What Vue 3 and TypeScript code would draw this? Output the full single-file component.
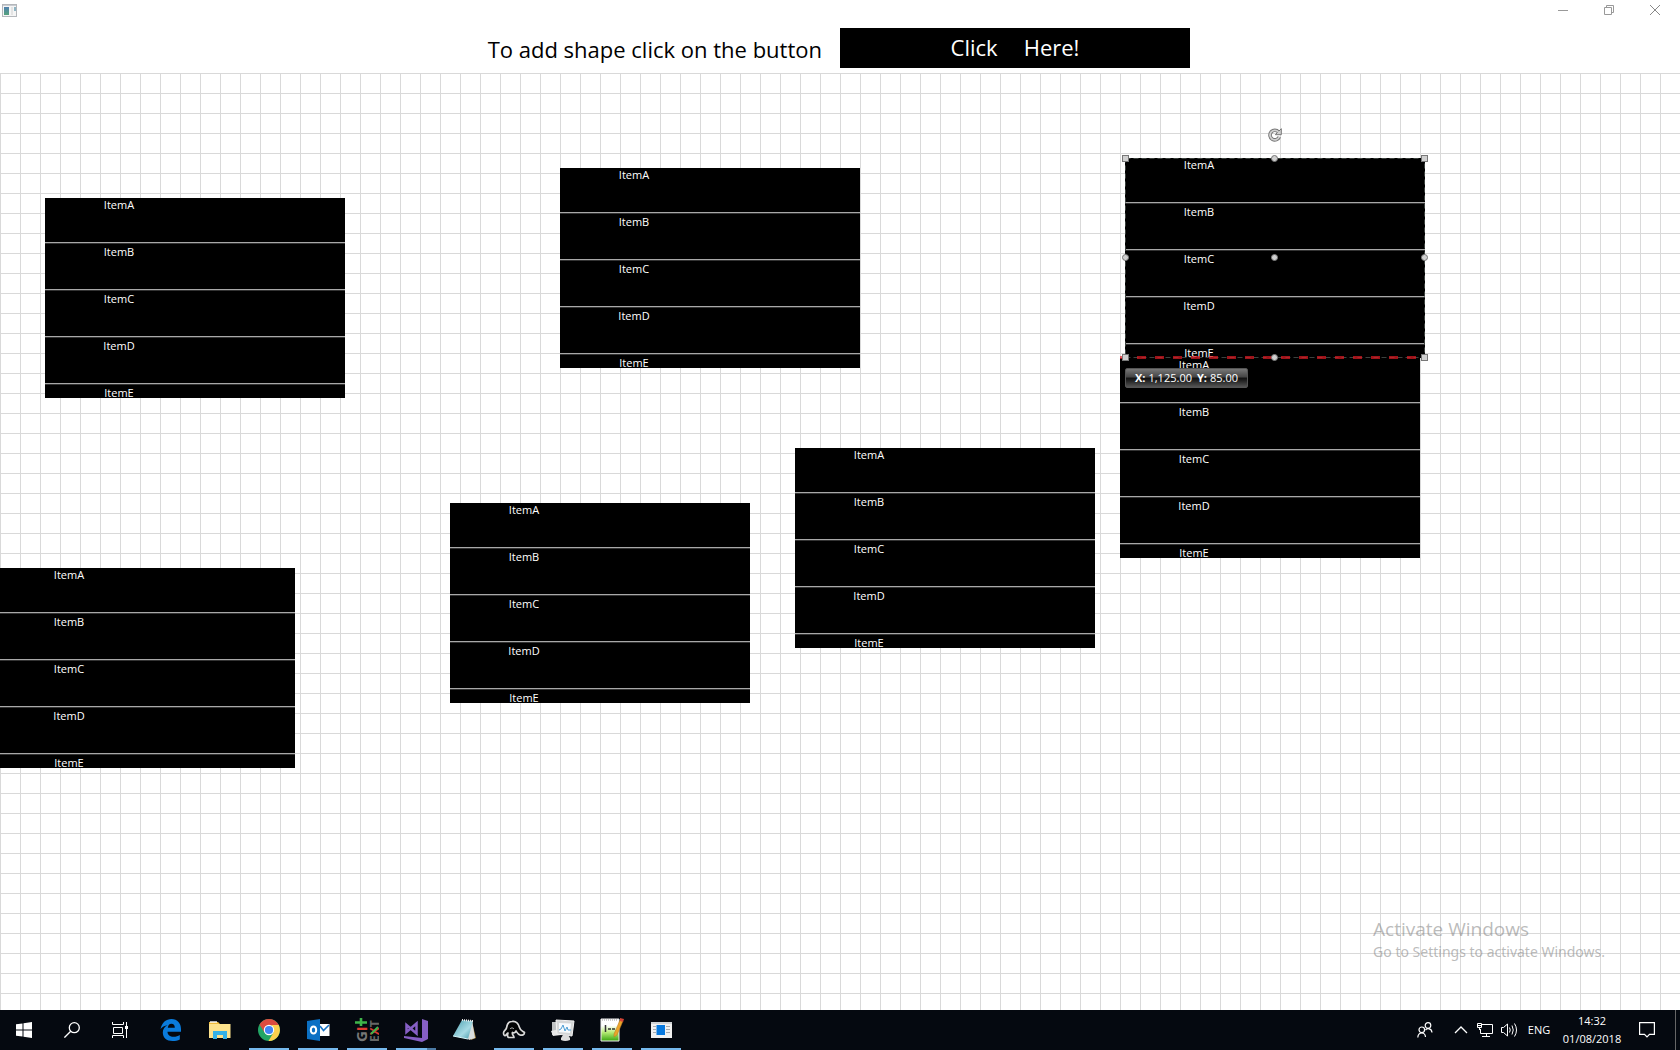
<script setup lang="ts">
interface Shape {
  id: number
  x: number
  y: number
  selected?: boolean
}

const items: string[] = ['ItemA', 'ItemB', 'ItemC', 'ItemD', 'ItemE']

const shapes: Shape[] = [
  { id: 1, x: 45, y: 125 },
  { id: 2, x: 560, y: 95 },
  { id: 3, x: 1120, y: 285 },
  { id: 4, x: -5, y: 495 },
  { id: 5, x: 450, y: 430 },
  { id: 6, x: 795, y: 375 },
  { id: 7, x: 1125, y: 85, selected: true },
]

const handles: string[] = ['nw', 'n', 'ne', 'w', 'c', 'e', 'sw', 's', 'se']
</script>

<template>
  <div class="screen">
    <header class="titlebar">
      <svg class="app-icon" width="16" height="14" viewBox="0 0 16 14">
        <defs>
          <linearGradient id="pane" x1="0" y1="0" x2="0" y2="1">
            <stop offset="0" stop-color="#4f7fae" />
            <stop offset="1" stop-color="#55a37c" />
          </linearGradient>
        </defs>
        <rect x="0.5" y="0.5" width="14" height="12" fill="#f5f5f5" stroke="#b4b7bb" />
        <rect x="1" y="1" width="13" height="1" fill="#c9ccd1" />
        <rect x="2" y="3" width="5" height="8" fill="url(#pane)" />
        <rect x="9" y="3" width="2" height="8" fill="#e3e3e3" />
        <rect x="12" y="3" width="2" height="4" fill="#8fb5c4" />
      </svg>
      <div class="window-controls">
        <button type="button" aria-label="Minimize">
          <svg width="10" height="10"><path d="M0 5.500H10" stroke="#999" /></svg>
        </button>
        <button type="button" aria-label="Restore">
          <svg width="10" height="10"><path d="M.5 2.500h7v7h-7zM2.500 2.500v-2h7v7h-2" fill="none" stroke="#999" /></svg>
        </button>
        <button type="button" aria-label="Close">
          <svg width="10" height="10"><path d="M0 0L10 10M10 0L0 10" stroke="#888" /></svg>
        </button>
      </div>
    </header>

    <section class="prompt">
      <p id="prompt-text">To add shape click on the button</p>
      <button type="button" class="add" aria-describedby="prompt-text">
        <span>Click</span><span>Here!</span>
      </button>
    </section>

    <main class="canvas">
      <div
        v-for="s in shapes"
        :key="s.id"
        class="node"
        :style="{ left: s.x + 'px', top: s.y + 'px' }"
      >
        <ul>
          <li v-for="item in items" :key="item"><span>{{ item }}</span></li>
        </ul>
        <template v-if="s.selected">
          <svg class="outline" width="300" height="200" viewBox="0 0 300 200">
            <rect x="0.5" y="0.5" width="299" height="199" fill="none" stroke="#3c423e" stroke-dasharray="5 3" />
          </svg>
          <svg class="guide" width="305" height="3" viewBox="0 0 305 3">
            <path d="M0 1.500H305" stroke="#e01b24" stroke-opacity="0.7" stroke-width="3" stroke-dasharray="9 9" stroke-dashoffset="1" />
          </svg>
          <i v-for="h in handles" :key="h" class="handle" :class="h"></i>
          <svg class="rotate" width="14" height="14" viewBox="0 0 14 14">
            <path d="M10.500 4A4.800 4.800 0 1 0 11.300 8.800" fill="none" stroke="#777" stroke-width="3.600" />
            <path d="M13.300.7V6.700H7.300L9.300 4.700z" fill="#d0d0d0" stroke="#777" />
            <path d="M10.500 4A4.800 4.800 0 1 0 11.300 8.800" fill="none" stroke="#d0d0d0" stroke-width="1.800" />
          </svg>
          <div class="position"><b>X:</b><span>1,125.00</span><b>Y:</b><span>85.00</span></div>
        </template>
      </div>
      <aside class="watermark">
        <p class="wm-title">Activate Windows</p>
        <p class="wm-text">Go to Settings to activate Windows.</p>
      </aside>
    </main>

    <footer class="taskbar">
      <nav class="system">
        <button type="button" aria-label="Start">
          <svg width="16" height="16" viewBox="0 0 16 16" fill="#fff"><path d="M0 2.300L6.500 1.400V7.500H0zM7.500 1.200L16 0V7.500H7.500zM0 8.500H6.500V14.600L0 13.700zM7.500 8.500H16V16L7.500 14.800z" /></svg>
        </button>
        <button type="button" aria-label="Search">
          <svg width="16" height="16" viewBox="0 0 16 16" fill="none" stroke="#fff" stroke-width="1.300"><circle cx="10.300" cy="5.700" r="5" /><path d="M6.700 9.300L.4 15.600" /></svg>
        </button>
        <button type="button" aria-label="Task View">
          <svg width="16" height="16" viewBox="0 0 16 16" fill="none" stroke="#fff"><path d="M.5 0V2.500H11.500V0M.5 16V13.500H11.500V16M1.500 5.500H10.500V11.500H1.500zM14.500 0V16" /><rect x="13" y="4" width="3" height="3" fill="#fff" stroke="none" /></svg>
        </button>
      </nav>
      <nav class="apps">
        <button type="button" aria-label="Edge">
          <svg width="22" height="24" viewBox="0 0 22 24"><path d="M.5 11C2 4.500 6 1 11.500 1C17.500 1 21 5.500 21 11V13.800H7.500C7.600 17 10 18.800 13.500 18.800C16 18.800 18.200 18 19.800 17V21.400C17.800 22.500 15.300 23 12.500 23C6.500 23 2.800 19.500 2.800 14.500C2.800 11.300 4.500 8.700 7.500 7.200C4.500 7.500 2 9 .5 11zM7.800 9.700H14.800C14.800 7.200 13.600 5.800 11.400 5.800C9.300 5.800 8.200 7.400 7.800 9.700z" fill="#0a7bdc" /></svg>
        </button>
        <button type="button" aria-label="File Explorer">
          <svg width="22" height="24" viewBox="0 0 22 24"><path d="M0 4H9L11 6H21V20H0z" fill="#eebb3d" /><path d="M1 3H8V5H1z" fill="#fff" opacity=".7" /><path d="M0 6H21.500V20H0z" fill="#fde28c" /><path d="M4 13H18V21H14V17H8V21H4z" fill="#35b2e8" /></svg>
        </button>
        <button type="button" class="running" aria-label="Chrome">
          <svg width="22" height="22" viewBox="0 0 22 22"><circle cx="11" cy="11" r="11" fill="#22a565" /><path d="M1.500 5.500A11 11 0 0 1 20.500 5.500L21 6.500H11L6.500 13.500z" fill="#dd4b3e" /><path d="M20.700 6A11 11 0 0 1 10.500 22L15.500 13.500L13.500 6z" fill="#fdd04d" /><circle cx="11" cy="11" r="5.200" fill="#fff" /><circle cx="11" cy="11" r="4.100" fill="#4285f4" /></svg>
        </button>
        <button type="button" class="running" aria-label="Outlook">
          <svg width="23" height="24" viewBox="0 0 23 24"><path d="M12 6H22.500V18H12z" fill="#fff" /><path d="M13 8L16.500 12.500L22 7" fill="none" stroke="#1874c5" stroke-width="1.600" /><path d="M0 3L13 1V23L0 21z" fill="#0b70c4" /><ellipse cx="6.500" cy="12" rx="2.700" ry="3.600" fill="none" stroke="#fff" stroke-width="2" /></svg>
        </button>
        <button type="button" class="running" aria-label="Git Extensions">
          <svg class="git" width="24" height="24" viewBox="0 0 24 24">
            <text transform="translate(12 24) rotate(-90)" font-size="15"><tspan fill="#777">G</tspan><tspan fill="#e03c31">I</tspan></text>
            <path d="M0 4.500H12M6 0V8" fill="none" stroke="#3fb54a" stroke-width="2.600" />
            <text transform="translate(24 24) rotate(-90)" font-size="12"><tspan fill="#666">E</tspan><tspan fill="#d33b32">X</tspan><tspan fill="#666">T</tspan></text>
            <path d="M16 16L23 9" stroke="#3fb54a" stroke-width="2" />
          </svg>
        </button>
        <button type="button" class="running grouped" aria-label="Visual Studio">
          <svg width="24" height="24" viewBox="0 0 24 24"><path d="M18 1L24 3V21L18 24L0 20V18L18 20z" fill="#865fc5" /><path d="M2.500 7L12.500 15.500V5.500L2.500 14z" fill="none" stroke="#865fc5" stroke-width="2.500" /></svg>
        </button>
        <button type="button" aria-label="Notepad">
          <svg width="24" height="24" viewBox="0 0 24 24"><defs><linearGradient id="note" x1="0" y1="0" x2="1" y2="1"><stop offset="0" stop-color="#4a9eae" /><stop offset=".6" stop-color="#a7dbe5" /><stop offset="1" stop-color="#3a91a4" /></linearGradient></defs><path d="M19 4L23 20L18 22z" fill="#a8843f" /><path d="M19 2L22 20L16 22L13 18z" fill="#d9dddd" /><path d="M9 2L20 3L15 21L0 18z" fill="url(#note)" /><path d="M9 2L20 3" stroke="#eee" stroke-width="2" stroke-dasharray="1 1" /><path d="M0 18L15 21" stroke="#d7f5f9" /></svg>
        </button>
        <button type="button" class="running" aria-label="Elephant">
          <svg width="24" height="20" viewBox="0 0 24 20"><path d="M1.500 13C1.500 10.500 4 10 4.500 8C5 4 7 1.500 10 1.500C14 1 16.500 4 17.500 7.500C18.500 11 20.500 11 22.500 12.500C22.500 15 20 15.500 18 15C16 14.500 15 12.500 14 11C13.500 13 11.500 13 10.500 12.500C9.500 14.500 12 15.500 12 17.500H6.500C5 16.500 5.500 14.500 6 13C4.500 14 4 16 2.500 15.500Q1.500 15 1.500 13z" fill="#030405" stroke="#d9d9d9" stroke-width="1.700" stroke-linejoin="round" /><path d="M8 9C9 7.500 11 7.500 12 9" fill="none" stroke="#aaa" /></svg>
        </button>
        <button type="button" class="running" aria-label="Remote Monitor">
          <svg width="24" height="24" viewBox="0 0 24 24"><path d="M1 4H7V17H1z" fill="#bfc2c3" /><path d="M0 13L9 11L10 17L2 18z" fill="#e9e9e9" /><path d="M5 2L23 3L21 18L6 16z" fill="#d4d6d7" stroke="#f3f3f3" /><path d="M8 5L20 5.500L19 15L8 14z" fill="#f7fbfe" /><path d="M8 12L10 11L12 7L14 13L16 9L17 12H20" fill="none" stroke="#4c9ed4" /><path d="M12 17H17L19 20V22Q14 24 10 22V20z" fill="#ddd" /></svg>
        </button>
        <button type="button" class="running" aria-label="Notepad++">
          <svg width="24" height="24" viewBox="0 0 24 24"><defs><linearGradient id="npp" x1="0" y1="0" x2="0" y2="1"><stop offset=".3" stop-color="#fff" /><stop offset=".6" stop-color="#b9ec79" /><stop offset="1" stop-color="#38a50d" /></linearGradient></defs><path d="M1 1H19V23H1z" fill="url(#npp)" stroke="#eee" /><path d="M2 2H18" stroke="#999" stroke-dasharray="1 1" /><path d="M5.500 7V14M8 11H11M12 11H15" stroke="#333" stroke-width="1.500" /><path d="M14 16L20 2L23 3L17 17L14 19z" fill="#eba42a" stroke="#b6761c" stroke-width=".5" /><path d="M20 0L24 1L23 4L20 3z" fill="#d34536" /></svg>
        </button>
        <button type="button" class="running" aria-label="Diagram Application">
          <svg width="21" height="16" viewBox="0 0 21 16"><path d="M0 0H21V16H0z" fill="#f1f1f1" /><path d="M0 0H21V2H0z" fill="#d0d3d6" /><path d="M5.500 3H14V13H5.500z" fill="#0879df" /><path d="M2 4.500H5M2 7.500H5M2 10.500H5M15 4.500H19M15 7.500H19M15 10.500H19" stroke="#a9acaf" /></svg>
        </button>
      </nav>
      <div class="tray">
        <button type="button" class="people" aria-label="People">
          <svg width="16" height="16" viewBox="0 0 16 16" fill="none" stroke="#fff" stroke-width="1.200"><circle cx="4.800" cy="7.800" r="2.800" /><path d="M.8 15.500C1 12.500 2.500 11 4.800 11S8.300 12.500 8.500 15" /><circle cx="11" cy="3.500" r="2.800" /><path d="M8.500 8C9.500 6.800 10.500 6.600 11.500 6.700C13.500 7 14.800 8.200 15 10.500" /></svg>
        </button>
        <button type="button" aria-label="Show hidden icons">
          <svg width="14" height="8" viewBox="0 0 14 8" fill="none" stroke="#fff" stroke-width="1.300"><path d="M1 7L7 1L13 7" /></svg>
        </button>
        <button type="button" aria-label="Network">
          <svg width="16" height="14" viewBox="0 0 16 14" fill="none" stroke="#fff"><path d="M5 1.500H15.500V10.500H3.500V6M9.500 10.500V13M5 13.500H13M.5.5H4.500V4.500H.5zM2.500 4.500V7" /><path d="M1 2.500H4" /></svg>
        </button>
        <button type="button" aria-label="Volume">
          <svg width="17" height="14" viewBox="0 0 17 14" fill="none" stroke="#fff"><path d="M.5 4.500H2.500L6.500 1V13L2.500 9.500H.5zM8.500 4.500Q10 7 8.500 9.500M11 2.500Q13.500 7 11 11.500M13.500.5Q17.500 7 13.500 13.500" /></svg>
        </button>
        <button type="button" class="lang">ENG</button>
        <button type="button" class="clock"><time>14:32</time><time>01/08/2018</time></button>
        <button type="button" class="notify" aria-label="Notifications">
          <svg width="16" height="16" viewBox="0 0 16 16" fill="none" stroke="#fff" stroke-width="1.200"><path d="M.6.6H15.400V12.400H10.500L8 15L5.500 12.400H.6z" /></svg>
        </button>
        <i class="peek"></i>
      </div>
    </footer>
  </div>
</template>

<style>
body {
  margin: 0;
}
</style>

<style scoped>
.screen {
  display: flex;
  flex-direction: column;
  min-height: 100vh;
  background: #fff;
  color: #000;
  font-family: "Open Sans", "Noto Sans", sans-serif;
  font-size: 11px;
  line-height: 14px;
  overflow: hidden;
}
button {
  display: flex;
  align-items: center;
  justify-content: center;
  padding: 0;
  border: 0;
  background: none;
  color: inherit;
  font: inherit;
}
svg {
  display: block;
}
p,
ul {
  margin: 0;
  padding: 0;
}
.titlebar {
  display: flex;
  justify-content: space-between;
  align-items: flex-start;
  height: 20px;
  padding: 0 2px;
}
.app-icon {
  margin-top: 4px;
}
.window-controls {
  display: flex;
}
.window-controls button {
  width: 46px;
  height: 20px;
}
.prompt {
  display: grid;
  grid-template-columns: 1fr 1fr;
  align-items: center;
  padding: 8px 0 5px;
  font-size: 22px;
  line-height: 30px;
}
.prompt p {
  padding: 2px 18px 0 0;
  text-align: right;
}
.add {
  box-sizing: border-box;
  width: 350px;
  height: 40px;
  padding-bottom: 2px;
  gap: 26px;
  background: #000;
  color: #fff;
}
.canvas {
  position: relative;
  flex: 1;
  min-height: 720px;
  overflow: hidden;
  background-image: linear-gradient(#d9d9d9 1px, transparent 1px),
    linear-gradient(90deg, #d9d9d9 1px, transparent 1px);
  background-size: 20px 20px;
}
.node {
  position: absolute;
  width: 300px;
  height: 200px;
}
.node ul {
  height: 200px;
  background: #000;
  color: #fff;
  list-style: none;
}
.node li {
  height: 44px;
  margin-bottom: 1px;
  border-bottom: 1px solid #333;
  box-shadow: inset 0 -1px #a8a8a8;
  padding-bottom: 1px;
}
.node li:last-child {
  height: 12px;
  margin: 0;
  padding: 0;
  border: 0;
  box-shadow: none;
}
.node li span {
  display: block;
  width: 148px;
  text-align: center;
}
.outline {
  position: absolute;
  top: 0;
  left: 0;
}
.guide {
  position: absolute;
  top: 198px;
  left: -5px;
}
.handle {
  position: absolute;
  box-sizing: border-box;
  width: 7px;
  height: 7px;
  margin: -3px 0 0 -3px;
  border: 1px solid #777;
  border-radius: 50%;
  background: #d0d0d0;
}
.nw,
.ne,
.sw,
.se {
  border-radius: 0;
}
.nw,
.n,
.ne {
  top: 0;
}
.w,
.c,
.e {
  top: calc(50% - 1px);
}
.sw,
.s,
.se {
  top: calc(100% - 1px);
}
.nw,
.w,
.sw {
  left: 0;
}
.n,
.c,
.s {
  left: calc(50% - 1px);
}
.ne,
.e,
.se {
  left: calc(100% - 1px);
}
.rotate {
  position: absolute;
  top: -30px;
  left: 143px;
}
.position {
  position: absolute;
  top: 210px;
  left: 0;
  display: flex;
  box-sizing: border-box;
  height: 20px;
  padding: 0 9px;
  border: 1px solid #555;
  border-radius: 2px;
  background: linear-gradient(#777, #444 45%, #111 50%, #1c1c1c 60%, #555);
  color: #fff;
  line-height: 18px;
  white-space: nowrap;
}
.position b {
  margin-right: 3px;
}
.position span + b {
  margin-left: 5px;
}
.watermark {
  position: absolute;
  right: 75px;
  bottom: 48px;
  color: rgba(120, 120, 120, 0.5);
}
.wm-title {
  font-size: 19px;
  line-height: 26px;
}
.wm-text {
  font-family: "Noto Sans", "Open Sans", sans-serif;
  font-size: 14px;
  line-height: 20px;
}
.taskbar {
  display: flex;
  height: 40px;
  background: #050910;
  color: #fff;
}
.system,
.apps,
.tray {
  display: flex;
}
.system button {
  width: 48px;
}
.apps {
  gap: 1px;
  margin-left: 3px;
}
.apps button {
  position: relative;
  width: 48px;
}
.git {
  font-weight: 700;
}
.running::after {
  content: "";
  position: absolute;
  left: 4px;
  right: 4px;
  bottom: 0;
  height: 2px;
  background: #76b9ed;
}
.grouped::after {
  background: linear-gradient(90deg, #76b9ed 31px, #4c7ba5 31px);
}
.tray {
  margin-left: auto;
}
.tray button {
  width: 24px;
}
.tray .people {
  width: 48px;
}
.tray .lang {
  width: 36px;
}
.tray .clock {
  flex-direction: column;
  gap: 4px;
  width: 70px;
}
.tray .notify {
  width: 40px;
}
.peek {
  width: 4px;
  margin-left: 8px;
  border-left: 1px solid #666;
}
</style>
